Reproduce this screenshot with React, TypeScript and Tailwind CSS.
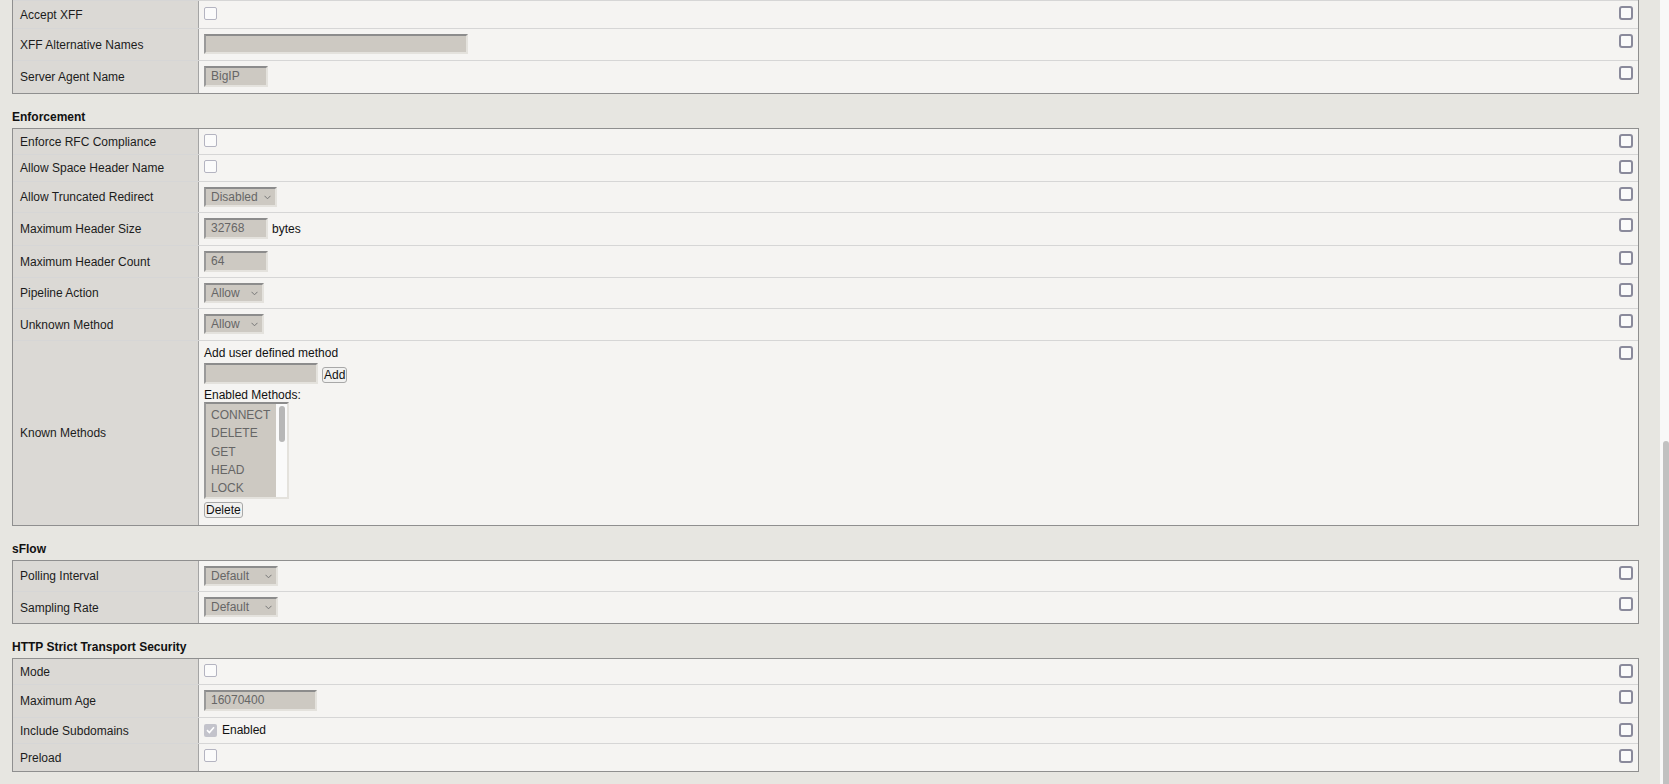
import React from 'react';

// Disabled-looking form controls, BIG-IP style
function Box({ w, children }: { w: string; children?: React.ReactNode }) {
  return (
    <div
      className={`${w} h-[21px] bg-[#cdc9c2] border-2 border-t-[#8c8c8c] border-l-[#9a9a9a] border-r-[#e4e2dd] border-b-[#e4e2dd] pl-[5px] text-[12px] leading-[17px] text-[#666]`}
    >
      {children}
    </div>
  );
}

function Select({ w, value }: { w: string; value: string }) {
  return (
    <div
      className={`${w} h-[20px] bg-[#cdc9c2] border-2 border-t-[#8c8c8c] border-l-[#9a9a9a] border-r-[#e4e2dd] border-b-[#e4e2dd] pl-[5px] pr-[4px] flex items-center justify-between text-[12px] text-[#666]`}
    >
      <span>{value}</span>
      <svg width="7" height="5" viewBox="0 0 7 5" fill="none" stroke="#777" strokeWidth="1">
        <path d="M0.5 0.8 L3.5 3.8 L6.5 0.8" />
      </svg>
    </div>
  );
}

function Check({ checked }: { checked?: boolean }) {
  if (checked) {
    return (
      <div className="w-[13px] h-[13px] rounded-[2px] bg-[#c3c3cb] flex items-center justify-center">
        <svg width="9" height="8" viewBox="0 0 9 8" fill="none" stroke="#fff" strokeWidth="1.6">
          <path d="M1 4.2 L3.4 6.5 L8 1.2" />
        </svg>
      </div>
    );
  }
  return <div className="w-[13px] h-[13px] rounded-[2px] border-[1.5px] border-[#b4b4c1] bg-[#fbfbfb]" />;
}

function RightCheck() {
  return <div className="w-[14px] h-[14px] rounded-[3px] border-2 border-[#8a8a9b] bg-[#fafafa]" />;
}

function Btn({ children }: { children: React.ReactNode }) {
  return (
    <div className="h-[16px] px-[1px] border border-[#a8a8a8] rounded-[3px] bg-[#f1f1f0] text-[12px] leading-[14px] text-[#111]">
      {children}
    </div>
  );
}

function Row({
  label,
  h,
  last,
  top,
  children,
}: {
  label: string;
  h: string;
  last?: boolean;
  top?: boolean;
  children?: React.ReactNode;
}) {
  return (
    <div
      className={`flex ${h} ${last ? '' : 'border-b border-[#d6d6d6]'} ${top ? 'border-t border-t-[#d6d6d6]' : ''}`}
    >
      <div className="w-[186px] shrink-0 bg-[#dbd9d5] border-r border-[#a4a4a4] flex items-center pl-[7px] text-[12px] text-[#1c1c1c]">
        {label}
      </div>
      <div className="flex-1 bg-[#f5f4f2] flex justify-between pl-[5px] pr-[5px] pt-[5px]">
        <div className="text-[12px] text-[#111]">{children}</div>
        <RightCheck />
      </div>
    </div>
  );
}

function Table({ children, noTop }: { children: React.ReactNode; noTop?: boolean }) {
  return (
    <div
      className={`ml-[12px] mr-[21px] border-x border-b border-[#8f8f8f] ${noTop ? '' : 'border-t'}`}
    >
      {children}
    </div>
  );
}

function Heading({ children }: { children: React.ReactNode }) {
  return (
    <div className="mt-[16px] mb-[4px] pl-[12px] text-[12px] leading-[14px] font-bold text-[#111]">
      {children}
    </div>
  );
}

const methods = ['CONNECT', 'DELETE', 'GET', 'HEAD', 'LOCK'];

export default function App() {
  return (
    <div className="flex h-[784px] overflow-hidden bg-[#e7e6e1] font-['Liberation_Sans',Arial,sans-serif]">
      <div className="flex-1">
        <Table noTop>
          <Row label="Accept XFF" h="h-[29px]" top>
            <div className="pt-[1px]">
              <Check />
            </div>
          </Row>
          <Row label="XFF Alternative Names" h="h-[32px]">
            <div className="w-[264px] h-[20px] bg-[#cdc9c2] border-2 border-t-[#8c8c8c] border-l-[#9a9a9a] border-r-[#e4e2dd] border-b-[#e4e2dd]" />
          </Row>
          <Row label="Server Agent Name" h="h-[32px]" last>
            <Box w="w-[64px]">BigIP</Box>
          </Row>
        </Table>

        <Heading>Enforcement</Heading>
        <Table>
          <Row label="Enforce RFC Compliance" h="h-[26px]">
            <Check />
          </Row>
          <Row label="Allow Space Header Name" h="h-[27px]">
            <Check />
          </Row>
          <Row label="Allow Truncated Redirect" h="h-[31px]">
            <Select w="w-[73px]" value="Disabled" />
          </Row>
          <Row label="Maximum Header Size" h="h-[33px]">
            <div className="flex items-center">
              <Box w="w-[64px]">32768</Box>
              <span className="ml-[4px]">bytes</span>
            </div>
          </Row>
          <Row label="Maximum Header Count" h="h-[32px]">
            <Box w="w-[64px]">64</Box>
          </Row>
          <Row label="Pipeline Action" h="h-[31px]">
            <Select w="w-[60px]" value="Allow" />
          </Row>
          <Row label="Unknown Method" h="h-[32px]">
            <Select w="w-[60px]" value="Allow" />
          </Row>
          <Row label="Known Methods" h="h-[184px]" last>
            <div className="leading-[14px]">Add user defined method</div>
            <div className="mt-[3px] flex items-end gap-[4px]">
              <Box w="w-[114px]" />
              <div className="mb-[1px]">
                <Btn>Add</Btn>
              </div>
            </div>
            <div className="mt-[4px] leading-[14px]">Enabled Methods:</div>
            <div className="w-[85px] h-[97px] flex border-2 border-t-[#8c8c8c] border-l-[#9a9a9a] border-r-[#e4e2dd] border-b-[#e4e2dd]">
              <div className="flex-1 bg-[#cdc9c2] pl-[5px] pt-[2px] text-[12px] leading-[18.3px] text-[#666] overflow-hidden">
                {methods.map((m) => (
                  <div key={m}>{m}</div>
                ))}
              </div>
              <div className="w-[11px] bg-[#fafafa] pt-[2px] flex justify-center">
                <div className="w-[6px] h-[36px] rounded-full bg-[#b7b7b7]" />
              </div>
            </div>
            <div className="mt-[3px] flex">
              <Btn>Delete</Btn>
            </div>
          </Row>
        </Table>

        <Heading>sFlow</Heading>
        <Table>
          <Row label="Polling Interval" h="h-[31px]">
            <Select w="w-[74px]" value="Default" />
          </Row>
          <Row label="Sampling Rate" h="h-[31px]" last>
            <Select w="w-[74px]" value="Default" />
          </Row>
        </Table>

        <Heading>HTTP Strict Transport Security</Heading>
        <Table>
          <Row label="Mode" h="h-[26px]">
            <Check />
          </Row>
          <Row label="Maximum Age" h="h-[33px]">
            <Box w="w-[113px]">16070400</Box>
          </Row>
          <Row label="Include Subdomains" h="h-[26px]">
            <div className="flex items-center">
              <Check checked />
              <span className="ml-[5px] leading-[14px]">Enabled</span>
            </div>
          </Row>
          <Row label="Preload" h="h-[27px]" last>
            <Check />
          </Row>
        </Table>
      </div>

      {/* page scrollbar */}
      <div className="w-[9px] shrink-0 bg-[#f8f8f8] flex flex-col">
        <div className="mt-[441px] ml-[3px] flex-1 w-[6px] rounded-t-full bg-[#c1c1c1]" />
      </div>
    </div>
  );
}
